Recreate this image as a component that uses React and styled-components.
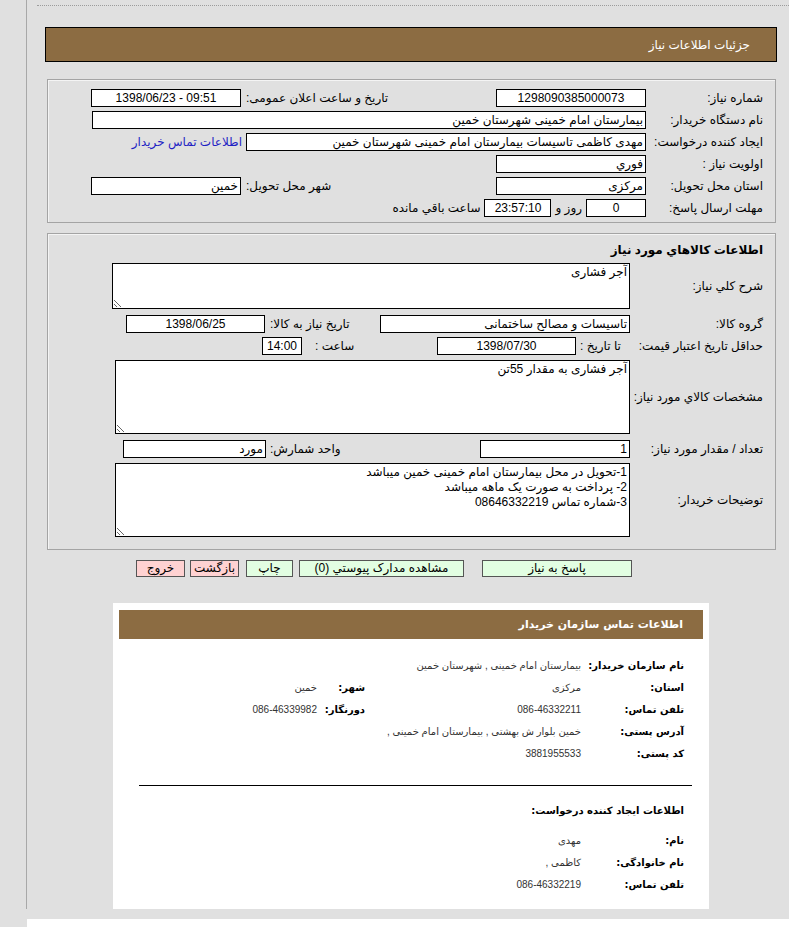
import React from 'react';
import styled, { createGlobalStyle } from 'styled-components';

const brown = '#8c6c42';
const pageGray = '#e0e0e0';

const GlobalStyle = createGlobalStyle`
  html, body { margin: 0; padding: 0; background: #fff; }
  body {
    font-family: "Liberation Sans", "DejaVu Sans", sans-serif;
    font-size: 12px;
    color: #000;
  }
`;

const Page = styled.div`
  display: flex;
  width: 789px;
  min-height: 927px;
`;

const Gutter = styled.div`
  width: 27px;
  flex-shrink: 0;
  background: linear-gradient(#a8a8a8, #a8a8a8) right top / 1px 909px no-repeat, ${pageGray};
`;

const Main = styled.div`
  flex: 1;
  align-self: flex-start;
  height: 919px;
  box-sizing: border-box;
  padding-top: 5px;
  background: ${pageGray};
  direction: rtl;
`;

const TopRule = styled.div`
  margin-left: 10px;
  border-top: 1px dotted #9c9c9c;
`;

const TitleBar = styled.div`
  margin: 21px 12px 0 18px;
  height: 33px;
  border: 1px solid #000;
  background: ${brown};
  color: #fff;
  display: flex;
  align-items: center;
  padding-right: 26px;
  font-size: 12px;
`;

const Fieldset = styled.div`
  margin: ${p => p.$top}px 13px 0 20px;
  border: 1px solid #a4a4a4;
  box-shadow: inset 1px 1px 0 #f4f4f4;
  padding: ${p => p.$pad};
`;

const Row = styled.div`
  display: flex;
  align-items: center;
  height: ${p => p.$h || 22}px;
  margin-top: ${p => p.$mt || 0}px;
  white-space: nowrap;
`;

const Label = styled.div`
  width: ${p => p.$w}px;
  flex-shrink: 0;
  box-sizing: border-box;
  padding-right: 12px;
`;

const SideLabel = styled.div`
  width: ${p => p.$w}px;
  flex-shrink: 0;
  box-sizing: border-box;
  text-align: left;
  padding-left: ${p => p.$pl ?? 5}px;
`;

const Field = styled.div`
  width: ${p => p.$w}px;
  flex-shrink: 0;
  height: 18px;
  box-sizing: border-box;
  border: 1px solid #000;
  background: #fff;
  line-height: 16px;
  padding: 0 2px;
  text-align: ${p => (p.$center ? 'center' : 'right')};
  direction: ${p => (p.$ltr ? 'ltr' : 'rtl')};
  overflow: hidden;
`;

const Text = styled.span`
  margin: 0 4px;
`;

const Link = styled.a`
  color: #1f1fc4;
  text-decoration: none;
  margin-right: 4px;
  cursor: pointer;
`;

const SectionHead = styled.div`
  font-weight: bold;
  padding-right: 12px;
  height: 18px;
  line-height: 18px;
`;

const Area = styled.textarea`
  width: ${p => p.$w}px;
  height: ${p => p.$h}px;
  flex-shrink: 0;
  box-sizing: border-box;
  margin: 0;
  border: 1px solid #000;
  background: #fff;
  font-family: inherit;
  font-size: 12px;
  line-height: 15px;
  padding: 1px 2px;
  direction: rtl;
  color: #000;
  outline: none;
`;

const Buttons = styled.div`
  display: flex;
  margin: 10px 157px 0 0;
  height: 17px;
`;

const Btn = styled.button`
  width: ${p => p.$w}px;
  height: 17px;
  margin: 0 0 0 ${p => p.$gap}px;
  padding: 0;
  border: 1px solid #555;
  background: ${p => (p.$warn ? '#ffd2d2' : '#e2fee2')};
  font-family: inherit;
  font-size: 12px;
  line-height: 15px;
  color: #000;
  white-space: nowrap;
  overflow: visible;
`;

const Card = styled.div`
  margin: 26px 80px 0 86px;
  background: #fff;
  height: 306px;
  box-sizing: border-box;
  padding: 7px 6px 0;
  font-family: "DejaVu Sans", sans-serif;
`;

const CardHead = styled.div`
  height: 29px;
  background: ${brown};
  color: #fff;
  font-weight: bold;
  font-size: 11px;
  display: flex;
  align-items: center;
  padding-right: 20px;
`;

const InfoGrid = styled.div`
  display: grid;
  grid-template-columns: 103px 216px 48px 1fr;
  grid-auto-rows: 22px;
  align-items: center;
  margin: ${p => p.$mt}px 19px 0 0;
  white-space: nowrap;
`;

const Key = styled.div`
  font-weight: bold;
  font-size: 10px;
`;

const Val = styled.div`
  font-family: "Liberation Sans", "DejaVu Sans", sans-serif;
  font-size: 10px;
  color: #333;
  grid-column: ${p => (p.$wide ? 'span 3' : 'auto')};
`;

const Rule = styled.hr`
  margin: 21px 11px 0 20px;
  border: 0;
  border-top: 1px solid #000;
`;

const SubHead = styled.div`
  font-weight: bold;
  font-size: 10px;
  margin: 19px 19px 0 0;
`;

export default function App() {
  return (
    <Page>
      <GlobalStyle />
      <Gutter />
      <Main>
        <TopRule />
        <TitleBar>جزئیات اطلاعات نیاز</TitleBar>

        <Fieldset $top={17} $pad="7px 0 3px">
          <Row>
            <Label $w={129}>شماره نیاز:</Label>
            <Field $w={150} $center>1298090385000073</Field>
            <SideLabel $w={255}>تاریخ و ساعت اعلان عمومی:</SideLabel>
            <Field $w={150} $center $ltr>1398/06/23 - 09:51</Field>
          </Row>
          <Row>
            <Label $w={129}>نام دستگاه خریدار:</Label>
            <Field $w={554}>بیمارستان امام خمینی شهرستان خمین</Field>
          </Row>
          <Row>
            <Label $w={129}>ایجاد کننده درخواست:</Label>
            <Field $w={400}>مهدی کاظمی تاسیسات بیمارستان امام خمینی شهرستان خمین</Field>
            <Link>اطلاعات تماس خریدار</Link>
          </Row>
          <Row>
            <Label $w={129}>اولویت نیاز :</Label>
            <Field $w={150}>فوري</Field>
          </Row>
          <Row>
            <Label $w={129}>استان محل تحویل:</Label>
            <Field $w={150}>مرکزی</Field>
            <SideLabel $w={255}>شهر محل تحویل:</SideLabel>
            <Field $w={150}>خمین</Field>
          </Row>
          <Row>
            <Label $w={129}>مهلت ارسال پاسخ:</Label>
            <Field $w={60} $center>0</Field>
            <Text>روز و</Text>
            <Field $w={67} $center>23:57:10</Field>
            <Text>ساعت باقي مانده</Text>
          </Row>
        </Fieldset>

        <Fieldset $top={10} $pad="7px 0 12px">
          <SectionHead>اطلاعات کالاهاي مورد نياز</SectionHead>
          <Row $h={46} $mt={4}>
            <Label $w={145}>شرح کلي نياز:</Label>
            <Area $w={518} $h={46} readOnly defaultValue="آجر فشاری" />
          </Row>
          <Row $mt={4}>
            <Label $w={145}>گروه کالا:</Label>
            <Field $w={250}>تاسیسات و مصالح ساختمانی</Field>
            <SideLabel $w={115}>تاریخ نیاز به کالا:</SideLabel>
            <Field $w={139} $center>1398/06/25</Field>
          </Row>
          <Row>
            <Label $w={145}>حداقل تاریخ اعتبار قیمت:</Label>
            <SideLabel $w={54} $pl={4}>تا تاریخ :</SideLabel>
            <Field $w={139} $center>1398/07/30</Field>
            <SideLabel $w={135} $pl={13}>ساعت :</SideLabel>
            <Field $w={40} $center>14:00</Field>
          </Row>
          <Row $h={74} $mt={3}>
            <Label $w={145}>مشخصات کالاي مورد نياز:</Label>
            <Area $w={515} $h={74} readOnly defaultValue="آجر فشاری به مقدار 55تن" />
          </Row>
          <Row $mt={4}>
            <Label $w={145}>تعداد / مقدار مورد نیاز:</Label>
            <Field $w={150}>1</Field>
            <SideLabel $w={214} $pl={4}>واحد شمارش:</SideLabel>
            <Field $w={143}>مورد</Field>
          </Row>
          <Row $h={74} $mt={3}>
            <Label $w={145}>توضیحات خریدار:</Label>
            <Area
              $w={515}
              $h={74}
              readOnly
              defaultValue={'1-تحویل در محل بیمارستان امام خمینی خمین میباشد\n2- پرداخت به صورت یک ماهه میباشد\n3-شماره تماس 08646332219'}
            />
          </Row>
        </Fieldset>

        <Buttons>
          <Btn $w={150} $gap={18}>پاسخ به نیاز</Btn>
          <Btn $w={165} $gap={6}>مشاهده مدارک پیوستي (0)</Btn>
          <Btn $w={47} $gap={7}>چاپ</Btn>
          <Btn $w={49} $gap={5} $warn>بازگشت</Btn>
          <Btn $w={49} $gap={0} $warn>خروج</Btn>
        </Buttons>

        <Card>
          <CardHead>اطلاعات تماس سازمان خریدار</CardHead>
          <InfoGrid $mt={15}>
            <Key>نام سازمان خریدار:</Key>
            <Val $wide>بیمارستان امام خمینی , شهرستان خمین</Val>
            <Key>استان:</Key>
            <Val>مرکزی</Val>
            <Key>شهر:</Key>
            <Val>خمین</Val>
            <Key>تلفن تماس:</Key>
            <Val>086-46332211</Val>
            <Key>دورنگار:</Key>
            <Val>086-46339982</Val>
            <Key>آدرس پستی:</Key>
            <Val $wide>خمین بلوار ش بهشتی , بیمارستان امام خمینی ,</Val>
            <Key>کد پستی:</Key>
            <Val $wide>3881955533</Val>
          </InfoGrid>
          <Rule />
          <SubHead>اطلاعات ایجاد کننده درخواست:</SubHead>
          <InfoGrid $mt={13}>
            <Key>نام:</Key>
            <Val $wide>مهدی</Val>
            <Key>نام خانوادگی:</Key>
            <Val $wide>کاظمی ,</Val>
            <Key>تلفن تماس:</Key>
            <Val $wide>086-46332219</Val>
          </InfoGrid>
        </Card>
      </Main>
    </Page>
  );
}
